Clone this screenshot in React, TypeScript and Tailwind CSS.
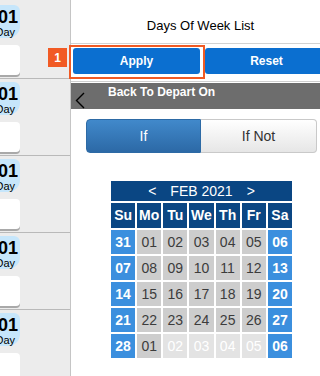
import React from "react";

const FONT = "font-['Liberation_Sans',Arial,sans-serif]";

type Cell = { label: string; kind: "weekend" | "day" | "faded" };

const rows: Cell[][] = [
  ["31", "01", "02", "03", "04", "05", "06"],
  ["07", "08", "09", "10", "11", "12", "13"],
  ["14", "15", "16", "17", "18", "19", "20"],
  ["21", "22", "23", "24", "25", "26", "27"],
  ["28", "01", "02", "03", "04", "05", "06"],
].map((r, ri) =>
  r.map((label, ci) => ({
    label,
    kind:
      ci === 0 || ci === 6
        ? "weekend"
        : ri === 4 && ci > 1
          ? "faded"
          : "day",
  }))
);

const dayNames = ["Su", "Mo", "Tu", "We", "Th", "Fr", "Sa"];

const cellClass: Record<Cell["kind"], string> = {
  weekend: "bg-[#3b8fde] text-white font-bold",
  day: "bg-[#cdcdcd] text-[#3c3c3c]",
  faded: "bg-[#e3e3e3] text-white",
};

/** One entry in the left strip: date badge, blank card, divider. */
const DayItem = () => (
  <div className="flex flex-col border-b border-[#b9b9b9] pt-[3px] pb-[3px]">
    <div className="-ml-[8px] flex h-[33px] w-[28px] flex-col items-end rounded-tr-[6px] rounded-br-[12px] bg-[#c6e6fb] pt-[4px] text-black">
      <span className="pr-[2px] text-[18px] font-bold leading-[17px]">01</span>
      <span className="pr-[5px] text-[11px] leading-[12px]">Day</span>
    </div>
    <div className="mt-[7px] h-[30px] w-[20px] rounded-r-[4px] bg-white shadow-[0_2px_0_#a9a9a9]" />
  </div>
);

const Calendar = () => (
  <div className="ml-[40px] mt-[28px] w-[181px]">
    <div className="flex h-[20px] items-center justify-center gap-[14px] bg-[#0a4683] text-[14px] text-white">
      <span>&lt;</span>
      <span>FEB 2021</span>
      <span>&gt;</span>
    </div>
    <div className="mt-[2px] grid grid-cols-7 gap-[2px]">
      {dayNames.map((d) => (
        <div
          key={d}
          className="flex h-[25px] items-center justify-center bg-[#0a4683] text-[14px] font-bold text-white"
        >
          {d}
        </div>
      ))}
      {rows.flat().map((c, i) => (
        <div
          key={i}
          className={`flex h-[24px] items-center justify-center text-[14px] ${cellClass[c.kind]}`}
        >
          {c.label}
        </div>
      ))}
    </div>
  </div>
);

export default function App() {
  return (
    <div className={`relative flex h-[376px] w-[320px] overflow-hidden bg-white ${FONT}`}>
      {/* left strip */}
      <div className="flex w-[70px] shrink-0 flex-col overflow-hidden bg-[#ececec]">
        <div className="ml-[21px] h-[8px] w-[34px] bg-[#f4f5fa]" />
        <div className="mt-[2px] flex flex-col">
          {[0, 1, 2, 3, 4].map((i) => (
            <DayItem key={i} />
          ))}
        </div>
      </div>

      {/* panel */}
      <div className="flex w-[260px] shrink-0 flex-col border-l border-[#c5c5c5]">
        <div className="h-[44px] border-b border-[#d2d2d2] pt-[19px] text-center text-[13px] leading-none text-black">
          Days Of Week List
        </div>

        <div className="flex h-[38px] gap-[5px] border-b border-[#cfcfcf] pl-[2px] pr-[2px] pt-[4px]">
          <div className="relative h-[26px] w-[127px]">
            <button className="h-full w-full rounded-[3px] bg-[#0b6fd0] text-[12px] font-bold text-white">
              Apply
            </button>
            <div className="pointer-events-none absolute -bottom-[5px] -left-[4px] -right-[5px] -top-[3px] border-2 border-[#f05a24]" />
          </div>
          <button className="h-[26px] flex-1 rounded-[3px] bg-[#0b6fd0] text-[12px] font-bold text-white">
            Reset
          </button>
        </div>

        <div className="mt-[1px] flex h-[26px] items-start bg-[#6d6d6d]">
          <svg
            className="ml-[4px] mt-[9px]"
            width="10"
            height="17"
            viewBox="0 0 10 17"
            fill="none"
            stroke="#000"
            strokeWidth="1.4"
          >
            <polyline points="9,1 1.5,8.5 9,16" />
          </svg>
          <span className="ml-[23px] pt-[3px] text-[12px] font-bold leading-none text-white">
            Back To Depart On
          </span>
        </div>

        <div className="ml-[15px] mt-[10px] flex h-[34px] w-[231px] text-[14px]">
          <div className="flex w-[115px] items-center justify-center rounded-l-[4px] border border-[#2d6aa5] bg-gradient-to-b from-[#4189cb] to-[#2c69a6] text-white">
            If
          </div>
          <div className="flex flex-1 items-center justify-center rounded-r-[4px] border border-l-0 border-[#c9c9c9] bg-gradient-to-b from-white to-[#e6e6e6] text-[#333]">
            If Not
          </div>
        </div>

        <Calendar />
      </div>

      {/* step marker */}
      <div className="absolute left-[48px] top-[48px] flex h-[19px] w-[19px] items-center justify-center bg-[#f15a24] text-[12px] font-bold text-white">
        1
      </div>
    </div>
  );
}
